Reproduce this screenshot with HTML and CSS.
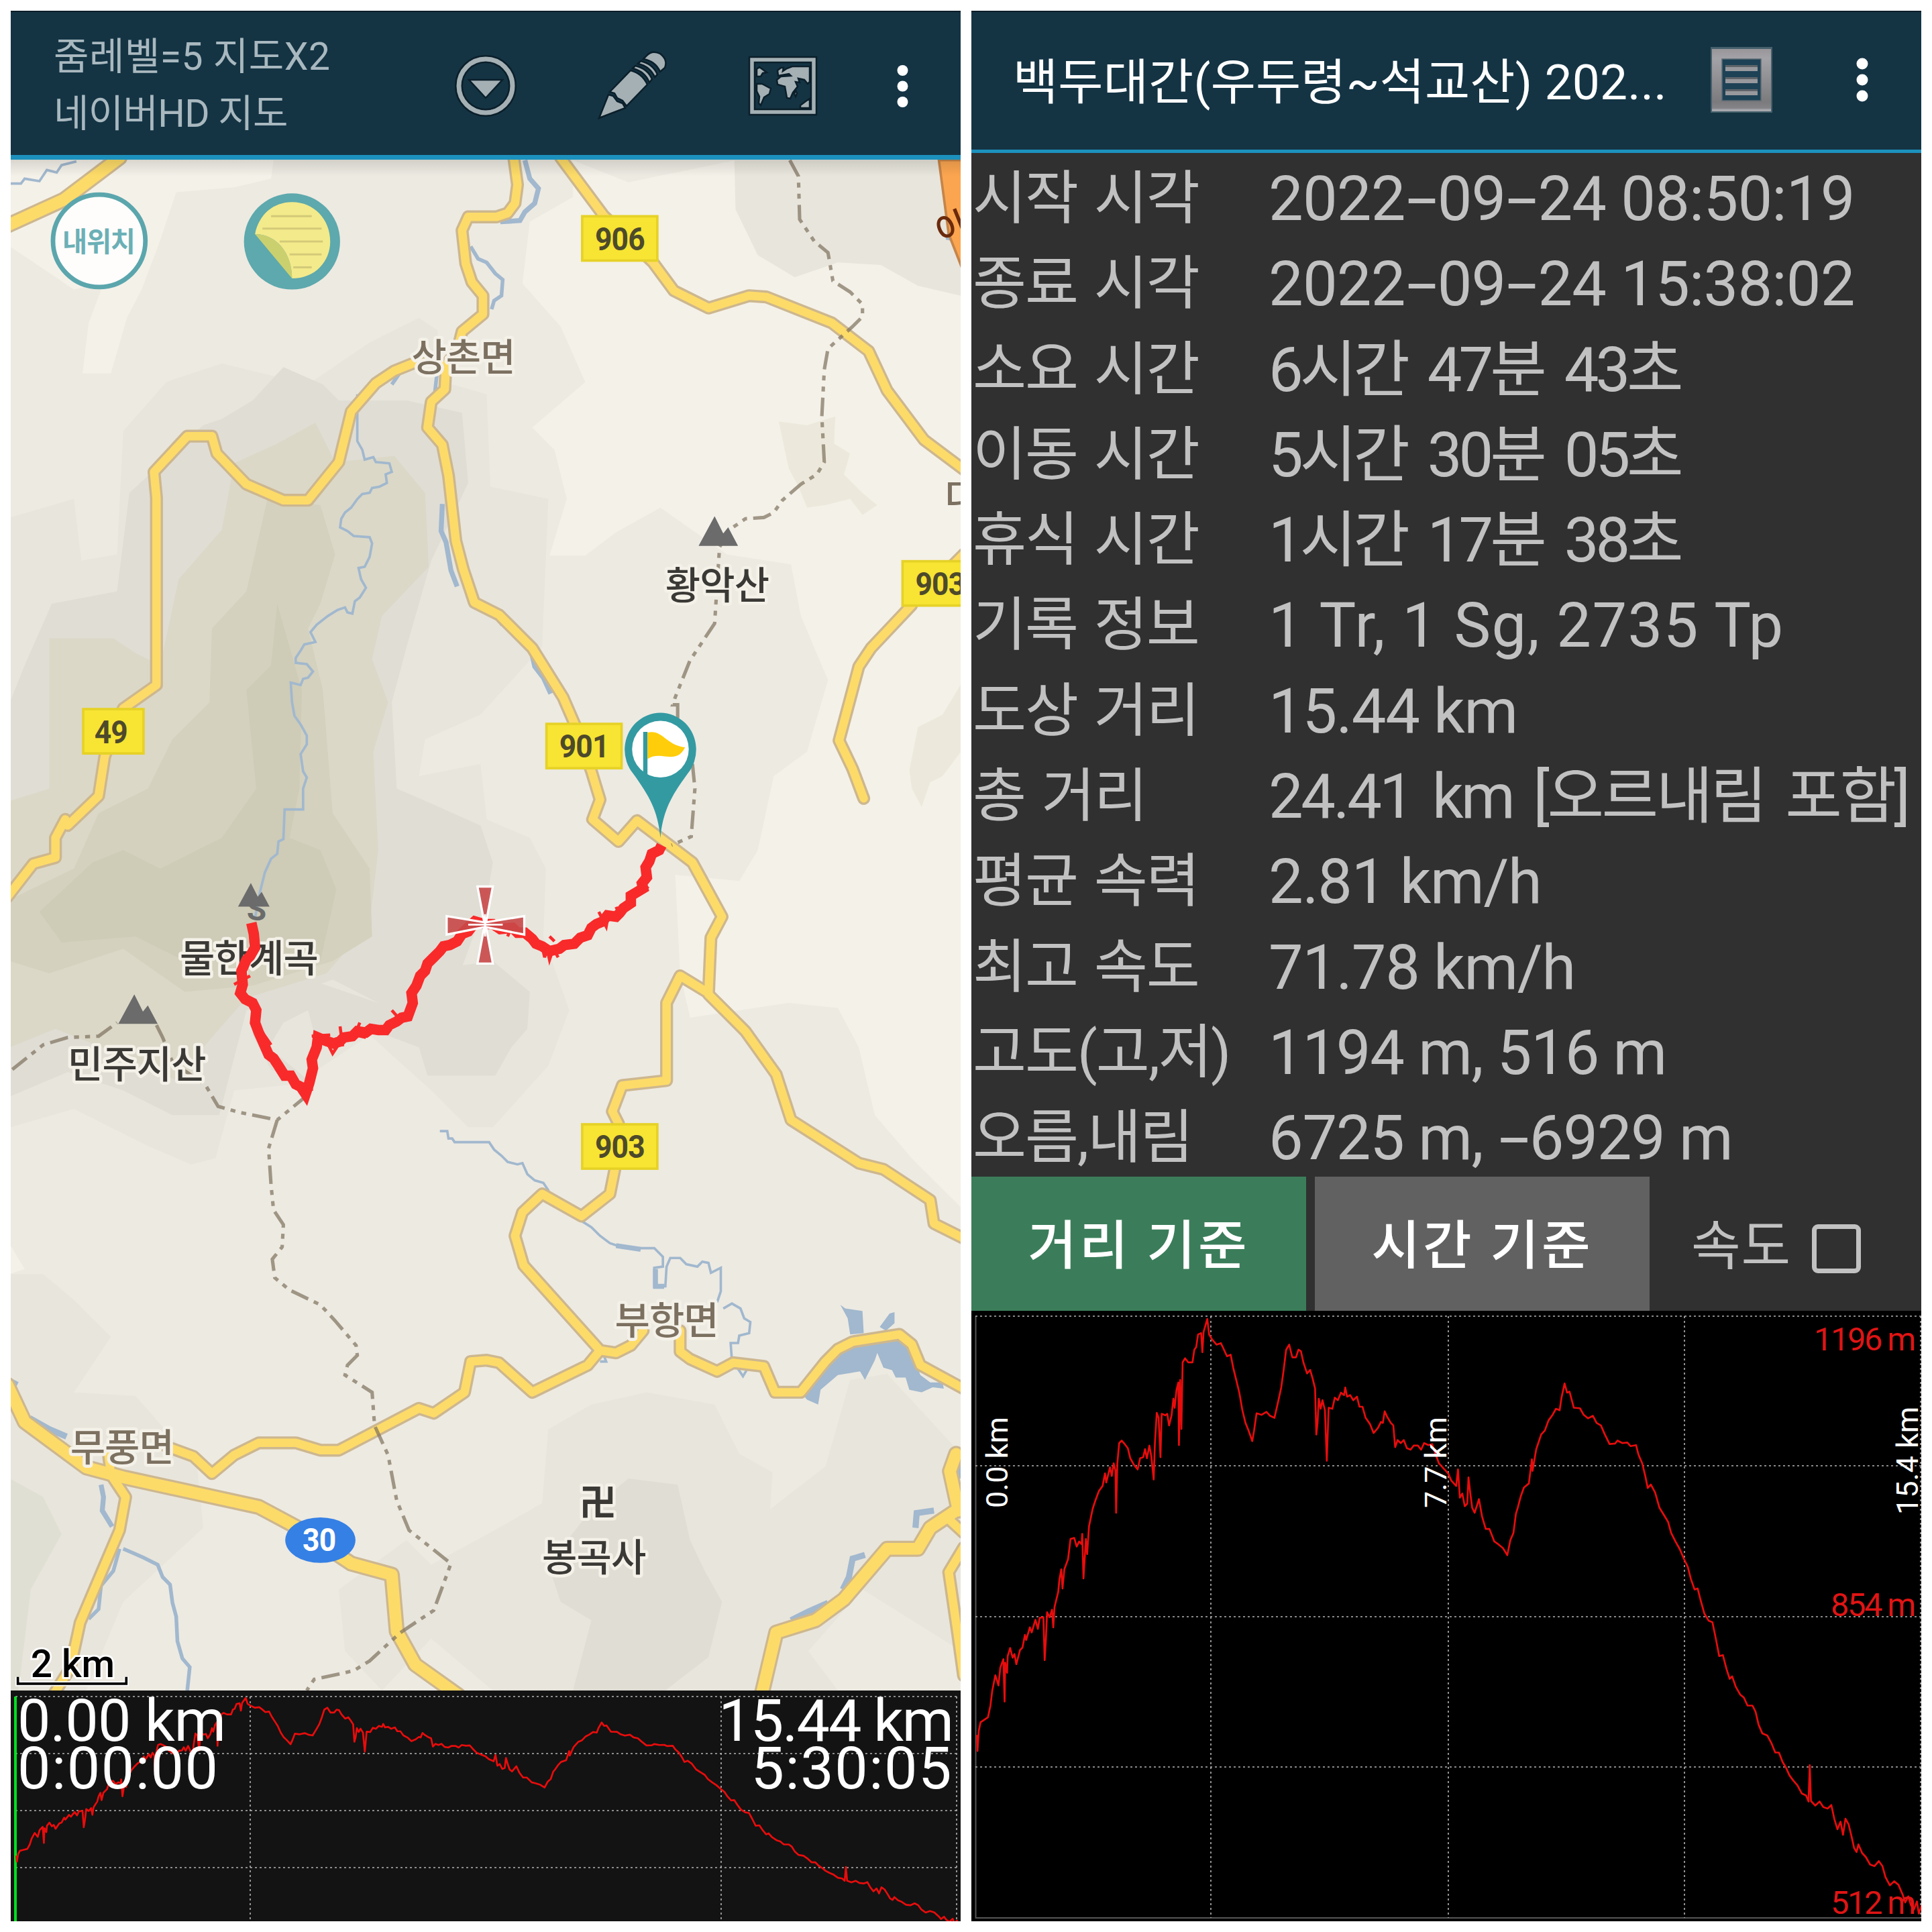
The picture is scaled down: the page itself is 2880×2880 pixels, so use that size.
FILE: index.html
```
<!DOCTYPE html>
<html lang="ko">
<head>
  <meta charset="UTF-8" />
  <meta name="viewport" content="width=device-width, initial-scale=1.0"/>
  <title>백두대간(우두령~석교산)</title>
  <link rel="stylesheet" href="styles.css">
</head>
<body>
  <div class="screens">

    <!-- 지도 화면 -->
    <section class="screen">
      <header class="bar bar-map">
        <div class="bar-info">
          <div>줌레벨=5 지도X2</div>
          <div class="layer">네이버HD 지도</div>
        </div>
        <svg class="bar-icons" viewBox="660 16 772 216">
          <g class="ico">
            <circle cx="724" cy="127" r="40" class="ring-dark"/>
            <circle cx="724" cy="127" r="40" class="ring"/>
            <path d="M699 118H749L724 145Z"/>
          </g>
          <g class="ico" transform="translate(-4 0)">
            <path d="M897 175L911 140L918 142L924 150L932 153L936 160Z M913 136L944 104Q961 108 969 125L938 157L932 149L924 145L920 138Z M947 101L951 97Q969 101 976 117L972 122Q965 105 947 101Z M955 94L959 90Q977 94 984 110L980 114Q973 98 955 94Z M963 87L968 82Q976 73 988 79Q1000 88 995 100L988 106Q981 90 963 87Z"/>
            <path fill-rule="evenodd" d="M1121 84H1221V170H1121Z M1129 92V162H1213V92Z"/>
            <path d="M1132 102L1136 99L1147 107L1141 108L1138 113L1132 113Z M1132 124L1140 124L1153 131L1151 139L1143 144L1138 156L1135 153L1136 143L1132 135Z M1164 112L1163 104L1168 100H1172L1171 105L1177 101L1185 98H1211V121L1208 124L1203 118L1194 116L1196 122L1190 121L1193 128L1186 137L1182 146L1177 145L1174 128L1163 125L1162 118L1168 113L1183 112L1180 109Z M1190 134L1192 138L1190 143L1188 139Z M1197 160V156L1205 150L1211 146V160Z"/>
          </g>
          <g class="dots">
            <circle cx="1345.500" cy="104" r="8"/>
            <circle cx="1345.500" cy="127.500" r="8"/>
            <circle cx="1345.500" cy="151" r="8"/>
          </g>
        </svg>
      </header>

      <svg class="map" viewBox="8.71 129.58 770.95 1242.45" preserveAspectRatio="none">
        <defs>
          <linearGradient id="topShade" x1="0" y1="0" x2="0" y2="1">
            <stop offset="0" stop-color="#000" stop-opacity=".12"/>
            <stop offset="1" stop-color="#000" stop-opacity="0"/>
          </linearGradient>
          <path id="peak" d="M-16 11L-3 -13L4 1L8 -4L16 11Z"/>
          <g id="roads">
            <path d="M417 128L420 150L418 165L412 173L403 176L380 176L375 187L378 214L383 229L392 240V255L375 269L371 285L362 296L361 316L350 326L347 347L359 361L364 386L370 439L376 462L385 489L405 499L432 526L457 566L467 589L480 626L487 649L481 665L502 683L517 666L562 700L586 744L577 761L575 807L605 837L630 872L642 909L697 944L717 949L755 974L758 993L782 1005"/>
            <path d="M340 293L320 301L305 311L285 334L275 375L250 406L230 406L200 393L176 368L172 354H152L125 383L127 404V556L100 575L92 595L85 614L80 646L55 670L53 665L45 680V696L27 701L6 728"/>
            <path d="M455 128L490 175L530 213L547 236L575 250L608 240L622 241L675 262L705 285L720 317L750 357L782 381"/>
            <path d="M740 491L707 526L697 541L681 601L692 624L701 648M782 450L770 462"/>
            <path d="M575 806L552 792L541 814V877L505 881L497 902L502 912L499 949L495 969L472 987L440 969L424 984L418 1003L425 1027L487 1096L500 1098L512 1092L522 1080"/>
            <path d="M487 1096L477 1108L432 1130L405 1106L395 1104L382 1105L377 1130L352 1147L340 1143L275 1177H260L240 1171H210L190 1181L172 1196L157 1182L135 1174"/>
            <path d="M552 1080V1097L560 1103L582 1113L595 1106L620 1109L629 1130H650L670 1105L680 1095L692 1089L730 1083L740 1091L747 1108L782 1127"/>
            <path d="M88 1180L90 1197L102 1215L97 1242L85 1270L65 1317L57 1354L43 1376"/>
            <path d="M770 1233L782 1244M782 1256L770 1276L777 1324L782 1360"/>
          </g>
          <path id="bigRoads" d="M97 128L52 162L6 183M6 1124L20 1154L70 1191L100 1199L210 1223L240 1239L285 1269L318 1278L322 1324L337 1351L372 1376M618 1376L630 1325L662 1315L685 1298L720 1257H745L755 1240L782 1222M776 1180L771 1194L778 1226"/>
        </defs>

        <!-- 지형 -->
        <path class="t-light" d="M8 130H222L220 145L190 152L143 156L130 195L115 235L103 258L90 303L67 303L72 262L84 230L60 235L8 200Z"/>
        <path class="t-light" d="M465 130L510 148L597 130L600 155L660 165L780 240V980L740 940L710 905L697 850L680 818L640 814L560 826L552 790L548 710L600 715L615 690L628 630L655 610L672 552L650 500L642 458L590 450L536 412L500 432L475 451H446L460 405L450 365L432 347L475 310L455 265L424 230L430 180L465 160Z"/>
        <path class="t-mid" d="M596 130H780V240L745 232L715 215L680 213L645 225L615 207L597 170Z"/>
        <path class="t-mid" d="M8 420L60 405L66 455L95 450L100 350L135 310L180 295L250 312L300 278L340 258L355 268L360 310L395 320L398 395L445 405L440 525L390 580L345 600L340 630L390 620L395 665L430 680L443 705L441 760L462 820L445 865L400 915L380 915L350 885L300 840L240 880L190 885L175 940L155 945L120 930L60 900L8 915Z"/>
        <path class="t-dark" d="M20 540L42 490L95 480L105 400L165 345L180 340L205 325L230 298L262 312L275 325L330 325L375 335L380 392L350 455L330 525L318 570L322 640L345 650L390 670L400 700L395 730L375 785L360 810L315 818L270 795L200 820L178 905L140 905L100 885L55 870L8 890V570Z"/>
        <path class="t-green" d="M40 518L92 518L110 530L130 540L145 470L180 430L190 376L225 360L256 343L272 375L320 370L345 400L348 460L310 500L302 535L315 570L303 610L307 690L300 750L265 790L200 810L165 850L150 880L95 855L45 835L8 850V650L40 640Z"/>
        <path class="t-olive" d="M217 405L260 410L272 450L260 490L250 510L262 560L270 660L300 705L302 760L270 780L205 800L150 805L100 770L40 790L8 780V730L60 705L80 660L120 640L140 600L170 570L172 510L200 480Z"/>
        <path class="t-deep" d="M225 490L245 560L243 640L235 680L260 690L273 722L260 780L150 780L110 760L50 765L32 740L75 700L100 690L130 705L180 680L208 640L200 560L220 540Z"/>
        <path class="t-dark" d="M210 812L260 798L310 815L340 810L330 835L280 843L262 850L250 880L220 868L205 840Z"/>
        <path class="t-mid" d="M230 830L250 820L258 850L248 875L218 850Z"/>
        <path class="t-dark" d="M400 780L430 805L428 835L415 850L402 873L347 873L340 850L300 835L335 820L365 785Z"/>
        <path class="t-mid" d="M8 1034H35L60 1055L90 1085L60 1130L110 1133L160 1190L165 1240L100 1300L70 1372H8Z"/>
        <path class="t-leaf" d="M8 1200L35 1215L50 1245L25 1290L15 1372H8Z"/>
        <path class="t-mid" d="M275 1290L330 1250L350 1270L405 1240L440 1220L445 1160L480 1140L525 1130L580 1140L600 1180L627 1195L625 1225L670 1190L690 1120L720 1115L780 1180V1372H640L620 1372H400L350 1330L310 1372L280 1340Z"/>
        <path class="t-light" d="M8 1010L20 1030L8 1034Z"/>
        <path class="t-dark" d="M510 1200L550 1205L560 1250L572 1275L586 1300L575 1345L540 1372H465L480 1315L455 1300L445 1270L480 1225Z"/>
        <path class="t-base" d="M700 1290L780 1340V1372H680L656 1340Z"/>
        <path class="t-leaf2" d="M632 342L655 345L678 338L677 360L690 368L685 385L700 400L712 410L700 418L690 405L670 410L655 412L648 395L640 380Z"/>
        <path class="t-leaf2" d="M780 555L765 580L745 590L738 625L740 640L748 655L755 635L765 630L780 610Z"/>

        <!-- 물길 -->
        <g class="water">
          <path d="M8 149L17 149L20 145L32 147L38 138L46 140L50 134L62 131"/>
          <path d="M290 320V338L290 358L294 365L296 373L303 371L305 375L316 376L318 383L313 385L314 392L308 395L302 396L300 400L294 401L290 405L285 412L280 416L277 421L276 428L282 431L287 435L300 436L302 441L300 452L296 460L291 461L293 470L297 477L292 485L288 488L286 498L282 497L280 493L274 495L266 500L257 507L252 513L256 521L247 523L244 528L240 534L240 538L249 539L254 545L250 550L246 551L244 556L236 554L237 570L239 581L244 588L249 597V604L244 612L246 626L249 631L246 640V657H231L230 681L226 683L225 693L220 697L215 708L211 724L207 745"/>
          <path class="w4" d="M426 130L430 145L437 153L434 165L426 172L422 179L406 180"/>
          <path class="w3" d="M382 200L388 210L395 213L402 222L408 227L407 240L401 244L399 251"/>
          <path class="w4" d="M359 409L358 431L362 440L366 463L371 476"/>
          <path class="w4" d="M402 499L408 507M431 528L434 541L441 550L447 563"/>
          <path class="w3" d="M355 300L353 318M325 302L318 312"/>
          <path d="M357 918H363L364 924H367L369 927H397L401 933L407 938L412 943L420 945L424 944L428 953L434 958L441 960L445 966L448 975"/>
          <path d="M472 991L480 996L487 1003L495 1009L504 1012L517 1013L531 1013L538 1020V1028L531 1029V1044H540L541 1028L544 1021L552 1021L557 1026L566 1028L570 1024L575 1025L577 1033L585 1029V1048L582 1057"/>
          <path class="w4" d="M500 1011L520 1014M532 1030V1044H539"/>
          <path d="M587 1062L594 1058L601 1062L604 1070L609 1073L608 1082L600 1084L599 1090H593L594 1104M597 1108L603 1117L606 1112"/>
          <path class="w5" d="M24 1151L40 1160L54 1166M8 1121L14 1124"/>
          <path class="w4" d="M82 1205L84 1215L83 1226L91 1239"/>
          <path class="w3" d="M97 1257L92 1275L82 1287L80 1306L72 1314M100 1257L107 1260L116 1264L128 1270L132 1280L138 1286L140 1301L143 1312L144 1332L148 1346L154 1353L152 1372"/>
          <path class="w5" d="M702 1262L692 1265L689 1280L684 1290M672 1301L656 1308L642 1315M758 1226L744 1228L743 1240M779 1180V1200M772 155L773 180L770 195"/>
          <path d="M487 1105L492 1105L490 1100"/>
        </g>
        <path class="lake" d="M625 1131L650 1130L655 1136L664 1140L666 1128L680 1116L698 1113L702 1120L710 1104L712 1098L717 1110L724 1112L727 1118L735 1118L738 1128L748 1130L757 1126L766 1127L765 1122L755 1122L747 1116L741 1100L732 1086L692 1089L672 1101L650 1128L625 1125ZM682 1059L686 1062L700 1064L701 1082L690 1083L688 1070ZM722 1066L726 1065V1074L719 1080L714 1077Z"/>

        <!-- 도로 -->
        <use href="#roads" class="road edge"/>
        <use href="#bigRoads" class="road edge big"/>
        <use href="#roads" class="road"/>
        <use href="#bigRoads" class="road big"/>
        <path class="highway" d="M762 130L770 190L781 218V130Z"/>

        <!-- 경계선 -->
        <g class="border">
          <path d="M641 130L648 143L649 178L661 196L672 205L676 228L690 237L700 247L700 257L692 265L682 274L672 283L669 300L667 338L669 375L663 385L650 393L635 406L628 416L620 420L605 421L592 430L584 444L580 506L560 536L548 566L546 572H550V590M562 620L564 640L561 679L545 686"/>
          <path d="M10 868L35 848L55 842L80 841L95 830M127 832L132 842L140 862L167 881L177 898L195 903L225 909L248 890M225 909L218 932L220 962L222 982L230 994L229 1012L221 1022L223 1037L235 1047L260 1059L272 1072L289 1092L290 1100L282 1108L280 1116L302 1130L304 1157L315 1181L322 1218L332 1242L366 1269L352 1307L325 1325L300 1348L287 1356L255 1363L249 1372"/>
        </g>

        <!-- 지명 -->
        <g class="peaks">
          <use href="#peak" x="583" y="432"/>
          <use href="#peak" x="112" y="820"/>
          <use href="#peak" transform="translate(206 727) scale(.8)"/>
        </g>
        <g class="place town">
          <text x="376" y="301">상촌면</text>
          <text x="541" y="1083">부항면</text>
          <text x="99" y="1186">무풍면</text>
          <text x="781" y="414">대</text>
        </g>
        <g class="place">
          <text x="582" y="486">황악산</text>
          <text x="202" y="789">물한계곡</text>
          <text x="111" y="875">민주지산</text>
          <text x="482" y="1275">봉곡사</text>
          <text x="485" y="1230" class="temple">卍</text>
          <text x="208" y="747" class="start">S</text>
        </g>
        <text class="hwy-name" transform="translate(776 194) rotate(-22)">이</text>

        <!-- 도로 번호 -->
        <g class="badge">
          <rect x="472.500" y="175.500" width="61" height="36"/><text transform="translate(503 203) scale(.93 1)">906</text>
          <rect x="67.500" y="575.500" width="49" height="36"/><text transform="translate(90 603) scale(.93 1)">49</text>
          <rect x="443.500" y="587.500" width="61" height="36"/><text transform="translate(474 614.500) scale(.93 1)">901</text>
          <rect x="732.500" y="455.500" width="61" height="36"/><text transform="translate(763 483) scale(.93 1)">903</text>
          <rect x="472.500" y="912.500" width="61" height="36"/><text transform="translate(503 940) scale(.93 1)">903</text>
        </g>
        <ellipse class="route" cx="260" cy="1250" rx="28.500" ry="18.500"/>
        <text class="route-no" transform="translate(259 1259) scale(.93 1)">30</text>

        <!-- 트랙 -->
        <path class="track" d="M537 686L535 690L529 693L527 699L524 704L525 712L521 717L522 721L517 724L512 727L512 733L506 737L503 741L500 744L493 743L489 748L484 750L480 753L477 759L471 761L466 766L458 767L454 770L446 772L440 768L435 766L432 762L426 757L420 757L416 753L406 754L400 750L393 750L386 748L380 756L375 758L371 764L365 767L360 768L357 772L352 777L347 782L345 788L341 792L338 800L334 806L335 814L331 825L326 826L322 829L316 832L313 836L307 836L301 835L297 838L290 837L286 841L279 842L276 845L271 847L265 845L258 842L257 850L253 860L254 867L251 879L248 888L244 882L240 880L236 873L231 873L226 865L222 859L218 856L214 847L210 838L207 830L208 820L205 814L199 811L195 806L197 799L196 788L200 779L203 776L207 769L206 758L204 749"/>
        <path class="track thin" d="M440 768L442 777L444 770L446 779L449 770L453 777M450 764L446 760M486 740L492 752L494 741M519 714L525 720L516 724M463 763L469 769M416 750L412 760M318 820L326 829M292 830L288 840L297 842M276 833L278 848L272 849M266 847L270 855L276 846M190 799L203 792M213 838L220 848M253 841L268 840M244 885L254 884M370 758L385 744M500 736L504 745M396 748L385 746"/>

        <!-- 깃발 -->
        <g class="pin">
          <path d="M536 680C534 658 527 646 514 628A29 30 0 1 1 558 628C545 646 538 658 536 680Z"/>
          <circle class="hole" cx="536" cy="608" r="23"/>
          <rect x="522" y="594" width="3.500" height="36"/>
          <path class="flag" d="M525.500 594.500C532 593 536 596 541 600C546 604 551 606 556 606.500C553 613 548 615 541 614C534 613 530 613 525.500 616Z"/>
        </g>

        <!-- 화면 중심 -->
        <path class="cross" d="M387.500 719.500H400L394.500 748.500L425.500 743.500V758.500L394.500 752.500L400 782H387.500L393 752.500L362.500 758.500V743.500L393 748.500Z"/>
        <path class="cross-line" d="M393.700 742V760M380 750.500H408"/>

        <!-- 지도 위 버튼 -->
        <circle class="btn-loc" cx="80.500" cy="195.500" r="37.500"/>
        <text class="btn-loc-text" x="80" y="204">내위치</text>
        <circle class="note-ring" cx="237" cy="196" r="39"/>
        <path class="note" d="M207 190C210 174 222 164 237 164C255 164 268 178 268 196C268 212 256 226 237 226C237 205 224 190 207 190Z"/>
        <path class="note-fold" d="M207 190C224 190 237 205 237 226Z"/>
        <path class="note-lines" d="M220 175.500H253M213 185.500H261M227 196H262M235 206.500H261M238 217H253"/>

        <text class="scale" x="59" y="1361">2 km</text>
        <path class="scale-halo" d="M14.500 1361V1366.500H102.500V1361"/>
        <path class="scale-bar" d="M14.500 1361V1366.500H102.500V1361"/>
        <rect x="8" y="129" width="773" height="14" fill="url(#topShade)"/>
      </svg>

      <div class="mini">
        <svg class="mini-chart" viewBox="0 0 1416 344">
          <path class="grid" d="M7 9H1410M7 94H1410M7 179H1410M7 264H1410M357 9V344M1059 9V344M1410 9V344"/>
          <path class="cursor" d="M7 9V344"/>
          <use href="#profile" class="elev" transform="translate(-8.200 -89.800) scale(.9147 .2851)"/>
        </svg>
        <div class="mini-text">
          <div>0.00 km<div class="time">0:00:00</div></div>
          <div class="end">15.44 km<div class="time">5:30:05</div></div>
        </div>
      </div>
    </section>

    <!-- 트랙 정보 화면 -->
    <section class="screen">
      <header class="bar bar-track">
        <h1>백두대간(우두령~석교산) 202...</h1>
        <svg class="list-icon" viewBox="0 0 92 98">
          <defs>
            <linearGradient id="metal" x1="0" y1="0" x2="0" y2="1">
              <stop offset="0" stop-color="#99969a"/>
              <stop offset=".15" stop-color="#a3a2a6"/>
              <stop offset=".85" stop-color="#7b7a7d"/>
              <stop offset=".95" stop-color="#858488"/>
              <stop offset=".97" stop-color="#a7a8ad"/>
            </linearGradient>
          </defs>
          <path class="shade" d="M0 0H92V98H0Z"/>
          <path fill="url(#metal)" fill-rule="evenodd" d="M2 3H90V96H2ZM17 18V80H75V18Z"/>
          <path class="sheet" d="M17 18H75V80H17Z"/>
          <path class="lines-dark" d="M22 29H70M22 47H70M22 65H70"/>
          <path class="lines" d="M22 33H70M22 51H70M22 69H70"/>
        </svg>
        <svg class="more" viewBox="0 0 20 70">
          <circle cx="10" cy="11" r="8.500"/><circle cx="10" cy="35" r="8.500"/><circle cx="10" cy="59" r="8.500"/>
        </svg>
      </header>

      <dl class="stats">
        <dt>시작 시각</dt><dd class="date">2022<i>-</i>09<i>-</i>24 08:50:19</dd>
        <dt>종료 시각</dt><dd class="date">2022<i>-</i>09<i>-</i>24 15:38:02</dd>
        <dt>소요 시간</dt><dd class="ko">6시간 47분 43초</dd>
        <dt>이동 시간</dt><dd class="ko">5시간 30분 05초</dd>
        <dt>휴식 시간</dt><dd class="ko">1시간 17분 38초</dd>
        <dt>기록 정보</dt><dd>1 Tr, 1 Sg, 2735 Tp</dd>
        <dt>도상 거리</dt><dd class="num">15.44 km</dd>
        <dt>총 거리</dt><dd class="total">24.41 km [오르내림 포함]</dd>
        <dt>평균 속력</dt><dd class="num">2.81 km/h</dd>
        <dt>최고 속도</dt><dd class="num">71.78 km/h</dd>
        <dt>고도(고,저)</dt><dd class="num">1194 m, 516 m</dd>
        <dt>오름,내림</dt><dd class="num">6725 m, <i>-</i>6929 m</dd>
      </dl>

      <div class="tabs">
        <button class="tab active">거리 기준</button>
        <button class="tab">시간 기준</button>
        <label class="speed">속도 <span class="box"></span></label>
      </div>

      <svg class="chart" viewBox="0 0 1416 910">
        <defs>
          <path id="profile" vector-effect="non-scaling-stroke" d="M18 1178L19 1210L21 1170L24 1153L30 1148L36 1143L40 1120L43 1090L48 1060L53 1080L56 1045L61 1028L63 1112L64 1035L67 1055L68 1022L72 1006L76 1025L79 1018L82 1038L88 1010L92 1005L96 980L98 990L104 965L107 975L113 950L117 968L120 946L126 945L128 1030L130 990L132 935L136 945L140 930L142 965L144 925L150 895L152 870L155 850L157 888L160 850L166 830L170 790L176 788L180 805L184 795L188 800L189 780L191 868L195 790L197 820L200 765L206 730L210 715L216 695L222 685L226 660L228 678L234 648L237 665L240 640L243 655L244 738L246 640L249 600L253 595L258 602L263 610L267 630L273 643L279 652L283 630L288 628L291 612L294 630L298 605L301 625L305 672L307 600L310 540L313 550L316 628L318 542L324 545L327 542L330 565L334 545L337 512L339 530L342 495L345 480L346 604L348 475L350 572L352 440L356 432L361 440L368 440L371 415L374 410L377 385L382 382L384 420L386 380L392 354L395 385L400 395L407 405L414 402L418 412L424 428L430 425L434 450L439 475L444 500L449 535L454 560L459 575L465 596L468 575L472 541L480 544L488 538L494 546L501 550L507 518L512 490L516 455L520 415L525 405L530 430L536 430L540 415L544 418L548 440L554 462L559 455L563 472L567 492L569 583L571 560L573 512L576 532L579 515L583 535L586 635L589 530L595 532L599 510L604 515L609 500L614 505L616 490L619 508L624 505L629 515L635 508L639 528L644 528L649 550L656 562L662 580L669 570L674 558L677 560L680 537L684 548L690 560L694 565L697 608L701 594L706 600L711 594L716 610L722 613L727 605L734 605L739 613L744 600L751 604L757 602L762 620L768 640L777 652L783 660L788 674L796 685L799 652L802 708L806 700L810 725L814 720L816 668L819 700L822 728L826 738L833 711L838 745L844 770L850 770L858 795L864 800L872 808L879 822L884 792L889 778L893 740L896 728L901 705L906 688L914 680L919 632L920 655L926 612L934 583L940 575L946 555L952 545L958 532L964 535L967 510L972 482L976 500L980 498L987 530L997 531L1003 544L1010 551L1018 546L1024 560L1031 565L1037 582L1045 602L1054 601L1058 595L1066 600L1074 599L1079 606L1088 604L1092 623L1098 640L1103 665L1107 689L1112 682L1119 698L1126 728L1134 744L1140 756L1145 778L1152 795L1159 810L1166 830L1172 845L1177 869L1183 890L1188 888L1193 912L1199 938L1206 952L1212 955L1217 984L1223 1022L1229 1020L1235 1048L1240 1067L1244 1062L1250 1083L1257 1098L1263 1104L1269 1120L1277 1120L1282 1132L1287 1158L1293 1175L1301 1179L1308 1195L1314 1213L1320 1213L1326 1232L1331 1242L1337 1258L1343 1268L1350 1278L1357 1294L1364 1298L1368 1310L1370 1238L1372 1309L1379 1318L1386 1310L1392 1321L1399 1324L1405 1317L1410 1345L1415 1365L1420 1350L1424 1376L1428 1344L1433 1355L1438 1380L1442 1402L1446 1410L1449 1395L1455 1412L1461 1420L1468 1435L1475 1438L1482 1428L1488 1438L1493 1460L1500 1476L1507 1468L1514 1475L1521 1495L1525 1510L1530 1498L1534 1515L1539 1524L1544 1508L1547 1532L1552 1515"/>
        </defs>
        <path class="frame" d="M6.500 8V905H1416"/>
        <path class="grid" d="M6 8H1416M6 231H1416M6 456H1416M6 680H1416M357 8V905M711 8V905M1063 8V905M1415 8V905"/>
        <use href="#profile" class="elev" transform="translate(-8.300 -254.300) scale(.9183 .7525)"/>
        <g class="alt">
          <text x="1406" y="59">1196 m</text>
          <text x="1406" y="455">854 m</text>
          <text x="1406" y="899">512 m</text>
        </g>
        <g class="dist">
          <text transform="translate(54 294) rotate(-90)">0.0 km</text>
          <text transform="translate(708 294) rotate(-90)">7.7 km</text>
          <text transform="translate(1411 304) rotate(-90)">15.4 km</text>
        </g>
      </svg>
    </section>
  </div>
</body>
</html>
```
FILE: styles.css
```
* {
  box-sizing: border-box;
}

body {
  margin: 0;
  background: #fff;
  font-family: Roboto, "Noto Sans CJK KR", sans-serif;
}

.screens {
  display: flex;
  gap: 16px;
  width: 2880px;
  height: 2880px;
  padding: 16px;
}

.screen {
  display: flex;
  flex-direction: column;
  width: 1416px;
  height: 2848px;
  background: #303030;
  overflow: hidden;
}

.bar {
  display: flex;
  align-items: center;
  flex: none;
  background: #143444;
  border-top: 2px solid #0b1d28;
}

.bar-map {
  height: 222px;
  border-bottom: 7px solid #1c91bd;
}

.bar-info {
  width: 644px;
  padding: 4px 0 0 64px;
  color: #a9b8bf;
  font-size: 57px;
  line-height: 85px;
  letter-spacing: .5px;
  white-space: nowrap;
}

.bar-info .layer {
  letter-spacing: -.7px;
}

.bar-icons {
  width: 772px;
  height: 216px;
}

.ico {
  fill: #a4b0b4;
  stroke: #0b1f2a;
  stroke-width: 2.5;
}

.ico .ring-dark {
  fill: none;
  stroke: #0b1f2a;
  stroke-width: 12;
}

.ico .ring {
  fill: none;
  stroke: #a4b0b4;
  stroke-width: 7;
}

.dots, .more {
  fill: #fff;
}

/* map */
.map {
  display: block;
  flex: none;
  width: 1416px;
  height: 2282px;
  background: #edeae2;
}

.t-base { fill: #edeae2; }
.t-light { fill: #f4f1e9; }
.t-mid { fill: #e8e5dc; }
.t-dark { fill: #e0ddd5; }
.t-green { fill: #dbd8c8; }
.t-olive { fill: #d4d1be; }
.t-deep { fill: #cecbb7; }
.t-leaf { fill: #dfe0d3; }
.t-leaf2 { fill: #ece9dc; }

.water path {
  fill: none;
  stroke: #a1b8ce;
  stroke-width: 2;
}

.water .w3 { stroke-width: 3; }
.water .w4 { stroke-width: 4; }
.water .w5 { stroke-width: 5; }

.lake {
  fill: #a1b8ce;
}

.road {
  fill: none;
  stroke: #fddb68;
  stroke-width: 6.8;
  stroke-linejoin: round;
  stroke-linecap: round;
}

.road.big { stroke-width: 9.5; }
.road.edge { stroke: #cdb78f; stroke-width: 10.5; }
.road.edge.big { stroke-width: 13; }

.highway {
  fill: #fba550;
  stroke: #c5854a;
  stroke-width: 2;
}

.border path {
  fill: none;
  stroke: #7d705c;
  stroke-opacity: .7;
  stroke-width: 2.8;
  stroke-dasharray: 15 5 4 5 4 5;
}

.peaks {
  fill: #6b6b6b;
}

.place text {
  font-family: "Noto Sans CJK KR", sans-serif;
  font-size: 31px;
  font-weight: 500;
  letter-spacing: -.5px;
  text-anchor: middle;
  fill: #3b3935;
  stroke: #f4f1e9;
  stroke-width: 5px;
  stroke-linejoin: round;
  paint-order: stroke;
}

.town text {
  fill: #7c7060;
}

.place .temple {
  font-size: 30px;
  font-weight: 700;
}

.place .start {
  font: 700 26px Roboto, sans-serif;
  fill: #6b6b6b;
  stroke: none;
}

.hwy-name {
  font-size: 28px;
  font-weight: 500;
  text-anchor: middle;
  fill: #6b2a0c;
}

.badge rect {
  fill: #f7e433;
  stroke: #e6d227;
  stroke-width: 2;
}

.badge text, .route-no {
  font-size: 26px;
  font-weight: 700;
  letter-spacing: -.5px;
  text-anchor: middle;
  fill: #4d4a2b;
}

.route {
  fill: #3580e5;
}

.route-no {
  fill: #fff;
}

.track {
  fill: none;
  stroke: #f92a2a;
  stroke-width: 8.5;
  stroke-linejoin: miter;
}

.thin {
  stroke-width: 2.5;
}

.pin {
  fill: #339aa2;
}

.pin .hole { fill: #fff; }
.pin .flag { fill: #ffcd0a; }

.cross {
  fill: #c84848;
  fill-opacity: .9;
  stroke: #fff;
  stroke-width: 1.8;
}

.cross-line {
  fill: none;
  stroke: #fff;
  stroke-width: 1.5;
}

.btn-loc {
  fill: #fff;
  fill-opacity: .85;
  stroke: #5ba6ad;
  stroke-width: 3.7;
}

.btn-loc-text {
  font-size: 22px;
  font-weight: 700;
  letter-spacing: -.7px;
  text-anchor: middle;
  fill: #6bb0b6;
}

.note-ring { fill: #5da9ad; }
.note { fill: #f3ea8b; }
.note-fold { fill: #cbd06f; }

.note-lines {
  stroke: #d3ca79;
  stroke-width: 1.6;
}

.scale {
  font-size: 31px;
  font-weight: 500;
  letter-spacing: -.1px;
  text-anchor: middle;
  stroke: #fff;
  stroke-width: 3px;
  paint-order: stroke;
}

.scale-halo, .scale-bar {
  fill: none;
  stroke: #fff;
  stroke-width: 4;
}

.scale-bar {
  stroke: #000;
  stroke-width: 2;
}

/* small elevation profile under the map */
.mini {
  display: grid;
  flex: 1;
  background: #131313;
}

.mini-chart, .mini-text {
  grid-area: 1 / 1;
}

.mini-chart {
  width: 1416px;
  height: 344px;
}

.mini-text {
  display: flex;
  justify-content: space-between;
  padding: 9px 12px 0 10px;
  color: #fff;
  font-size: 88px;
  line-height: 71px;
  letter-spacing: -.7px;
}

.mini-text .time {
  letter-spacing: 1.5px;
}

.mini-text .end {
  letter-spacing: -2px;
  text-align: right;
}

.grid {
  fill: none;
  stroke: #b5b5b5;
  stroke-width: 1.6;
  stroke-dasharray: 3 4;
}

.cursor {
  stroke: #00e020;
  stroke-width: 4;
}

.elev {
  fill: none;
  stroke: #e80c0c;
  stroke-width: 2.7;
  stroke-linejoin: round;
}

/* track info */
.bar-track {
  height: 212px;
  padding-left: 62px;
  border-bottom: 5px solid #1c91bd;
}

.bar-track h1 {
  width: 1040px;
  margin: 0 0 10px;
  color: #fff;
  font-size: 73px;
  font-weight: 400;
  letter-spacing: .2px;
  white-space: nowrap;
}

.list-icon {
  width: 92px;
  height: 98px;
  margin-bottom: 4px;
}

.list-icon .shade {
  fill: #46606c;
}

.list-icon .sheet {
  fill: #1d4256;
  stroke: #5c6b74;
  stroke-width: 1.5;
}

.list-icon .lines {
  stroke: #98999d;
  stroke-width: 6;
}

.list-icon .lines-dark {
  stroke: #5f646a;
  stroke-width: 4;
}

.more {
  width: 20px;
  height: 70px;
  margin: 0 0 4px 124px;
}

.stats {
  display: grid;
  flex: none;
  grid-template-columns: 441px 1fr;
  grid-auto-rows: 127.3px;
  height: 1526px;
  margin: 0;
  padding: 5px 0 0 2px;
  color: #c1c1c1;
  font-size: 92px;
  line-height: 127px;
  white-space: nowrap;
}

.stats dt {
  font-size: 87px;
  letter-spacing: -2px;
  word-spacing: 5px;
}

.stats dd {
  margin: 0;
  letter-spacing: 1.4px;
}

.stats .ko {
  letter-spacing: -5px;
  word-spacing: 13px;
}

.stats .total {
  letter-spacing: -3.5px;
  word-spacing: 11px;
}

.stats .num {
  letter-spacing: -1.3px;
}

.stats .date {
  letter-spacing: -.8px;
}

/* wide hyphen */
.stats i {
  display: inline-block;
  width: 48px;
  font-style: normal;
  text-align: center;
  transform: scaleX(1.8);
}

.tabs {
  display: flex;
  flex: none;
  gap: 13px;
  height: 200px;
}

.tab {
  width: 499px;
  padding: 0 0 8px;
  border: 0;
  background: #616161;
  color: #fff;
  font: 500 79px Roboto, "Noto Sans CJK KR", sans-serif;
  letter-spacing: 4px;
}

.tab.active {
  background: #3b7d5a;
}

.speed {
  display: flex;
  align-items: center;
  gap: 31px;
  padding: 0 0 8px 49px;
  color: #c1c1c1;
  font-size: 80px;
  letter-spacing: 1px;
}

.box {
  width: 73px;
  height: 73px;
  margin-top: 22px;
  border: 7px solid #c1c1c1;
  border-radius: 9px;
}

.chart {
  display: block;
  width: 1416px;
  height: 910px;
  background: #000;
}

.frame {
  fill: none;
  stroke: #555;
  stroke-width: 2;
}

.alt text {
  fill: #e01414;
  font-size: 49px;
  letter-spacing: -2.6px;
  text-anchor: end;
}

.dist text {
  fill: #fff;
  font-size: 45px;
}
```
